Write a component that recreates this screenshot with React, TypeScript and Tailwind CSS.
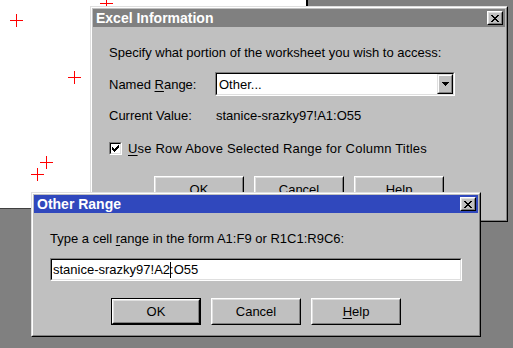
import React from "react";

const FONT = "font-['Liberation_Sans',Arial,sans-serif]";

function Cross({ x, y }: { x: number; y: number }) {
  return (
    <svg
      className="absolute"
      style={{ left: x - 6, top: y - 6 }}
      width="13"
      height="13"
      viewBox="0 0 13 13"
      shapeRendering="crispEdges"
    >
      <rect x="0" y="6" width="13" height="1" fill="#ff0000" />
      <rect x="6" y="0" width="1" height="13" fill="#ff0000" />
    </svg>
  );
}

function CloseGlyph() {
  const rows = [
    "XX....XX",
    ".XX..XX.",
    "..XXXX..",
    "...XX...",
    "..XXXX..",
    ".XX..XX.",
    "XX....XX",
  ];
  return (
    <svg width="8" height="7" viewBox="0 0 8 7" shapeRendering="crispEdges">
      {rows.map((r, y) =>
        r.split("").map((c, x) =>
          c === "X" ? <rect key={`${x}-${y}`} x={x} y={y} width="1" height="1" fill="#000" /> : null
        )
      )}
    </svg>
  );
}

function CloseButton() {
  return (
    <div className="w-[16px] h-[14px] bg-[#c0c0c0] border border-t-white border-l-white border-r-black border-b-black">
      <div className="w-full h-full border border-t-[#dfdfdf] border-l-[#dfdfdf] border-r-[#808080] border-b-[#808080] flex items-center justify-center">
        <CloseGlyph />
      </div>
    </div>
  );
}

function TitleBar({ title, active }: { title: string; active: boolean }) {
  return (
    <div
      className={`h-[18px] flex items-center justify-between pl-[3px] pr-[2px] shrink-0 ${
        active ? "bg-[#3048bd]" : "bg-[#808080]"
      }`}
    >
      <span className="text-white font-bold text-[14px] leading-[15px]">{title}</span>
      <CloseButton />
    </div>
  );
}

function Btn({ children, isDefault }: { children: React.ReactNode; isDefault?: boolean }) {
  return (
    <div className={`w-[90px] h-[27px] bg-[#c0c0c0] shrink-0 ${isDefault ? "border border-black" : ""}`}>
      <div className="w-full h-full border border-t-white border-l-white border-r-black border-b-black">
        <div className="w-full h-full border border-t-[#dfdfdf] border-l-[#dfdfdf] border-r-[#808080] border-b-[#808080] flex items-center justify-center text-[13px] leading-[15px]">
          {children}
        </div>
      </div>
    </div>
  );
}

function Sunken({ className, children }: { className: string; children: React.ReactNode }) {
  return (
    <div className={`border border-t-[#808080] border-l-[#808080] border-r-white border-b-white ${className}`}>
      <div className="w-full h-full border border-t-black border-l-black border-r-[#dfdfdf] border-b-[#dfdfdf] bg-white flex items-center">
        {children}
      </div>
    </div>
  );
}

function DropArrow() {
  return (
    <svg width="7" height="4" viewBox="0 0 7 4" shapeRendering="crispEdges">
      <rect x="0" y="0" width="7" height="1" fill="#000" />
      <rect x="1" y="1" width="5" height="1" fill="#000" />
      <rect x="2" y="2" width="3" height="1" fill="#000" />
      <rect x="3" y="3" width="1" height="1" fill="#000" />
    </svg>
  );
}

function CheckGlyph() {
  const rows = [
    "......X",
    ".....XX",
    "X...XXX",
    "XX.XXX.",
    "XXXXX..",
    ".XXX...",
    "..X....",
  ];
  return (
    <svg width="7" height="7" viewBox="0 0 7 7" shapeRendering="crispEdges">
      {rows.map((r, y) =>
        r.split("").map((c, x) =>
          c === "X" ? <rect key={`${x}-${y}`} x={x} y={y} width="1" height="1" fill="#000" /> : null
        )
      )}
    </svg>
  );
}

function Win({
  className,
  title,
  active,
  children,
}: {
  className: string;
  title: string;
  active: boolean;
  children: React.ReactNode;
}) {
  return (
    <div
      className={`absolute bg-[#c0c0c0] border border-t-[#dfdfdf] border-l-[#dfdfdf] border-r-black border-b-black ${className}`}
    >
      <div className="w-full h-full border border-t-white border-l-white border-r-[#808080] border-b-[#808080] p-px flex flex-col">
        <TitleBar title={title} active={active} />
        {children}
      </div>
    </div>
  );
}

export default function App() {
  return (
    <div className={`relative w-[513px] h-[348px] bg-[#808080] overflow-hidden text-black ${FONT}`}>
      {/* worksheet area */}
      <div className="absolute left-0 top-0 w-[308px] h-[209px] bg-white border-r-2 border-b border-r-black border-b-[#404040]" />
      <Cross x={16} y={20} />
      <Cross x={74} y={77} />
      <Cross x={106} y={3} />
      <Cross x={46} y={162} />
      <Cross x={37} y={174} />

      {/* Excel Information dialog */}
      <Win className="left-[90px] top-[6px] w-[418px] h-[216px]" title="Excel Information" active={false}>
        <div className="flex flex-col pl-[16px] text-[13px] leading-[15px]">
          <div className="mt-[18px]">Specify what portion of the worksheet you wish to access:</div>
          <div className="mt-[12px] flex items-center">
            <div className="w-[106px]">
              Named <span className="underline underline-offset-2">R</span>ange:
            </div>
            <Sunken className="w-[240px] h-[24px]">
              <div className="flex-1 pl-[2px]">Other...</div>
              <div className="w-[16px] h-full bg-[#c0c0c0] border border-t-[#dfdfdf] border-l-[#dfdfdf] border-r-black border-b-black">
                <div className="w-full h-full border border-t-white border-l-white border-r-[#808080] border-b-[#808080] flex items-center justify-center">
                  <DropArrow />
                </div>
              </div>
            </Sunken>
          </div>
          <div className="mt-[12px] flex">
            <div className="w-[107px]">Current Value:</div>
            <div>stanice-srazky97!A1:O55</div>
          </div>
          <div className="mt-[19px] flex items-center h-[13px]">
            <Sunken className="w-[13px] h-[13px]">
              <div className="w-full h-full flex items-center justify-center">
                <CheckGlyph />
              </div>
            </Sunken>
            <div className="ml-[6px] tracking-[0.2px]">
              <span className="underline underline-offset-2">U</span>se Row Above Selected Range for Column Titles
            </div>
          </div>
          <div className="mt-[21px] flex justify-center gap-[10px] pr-[16px]">
            <Btn>OK</Btn>
            <Btn>Cancel</Btn>
            <Btn>
              <span className="underline underline-offset-2">H</span>elp
            </Btn>
          </div>
        </div>
      </Win>

      {/* Other Range dialog */}
      <Win className="left-[31px] top-[192px] w-[450px] h-[145px]" title="Other Range" active={true}>
        <div className="flex flex-col pl-[16px] text-[13px] leading-[15px]">
          <div className="mt-[18px]">
            Type a cell <span className="underline underline-offset-2">r</span>ange in the form A1:F9 or R1C1:R9C6:
          </div>
          <Sunken className="mt-[12px] w-[412px] h-[23px]">
            <div className="pl-[1px] flex items-center">
              <span>stanice-srazky97!A2</span>
              <span className="inline-block w-px h-[16px] bg-black -mr-px" />
              <span>:O55</span>
            </div>
          </Sunken>
          <div className="mt-[17px] flex justify-center gap-[10px] pr-[16px]">
            <Btn isDefault>OK</Btn>
            <Btn>Cancel</Btn>
            <Btn>
              <span className="underline underline-offset-2">H</span>elp
            </Btn>
          </div>
        </div>
      </Win>
    </div>
  );
}
